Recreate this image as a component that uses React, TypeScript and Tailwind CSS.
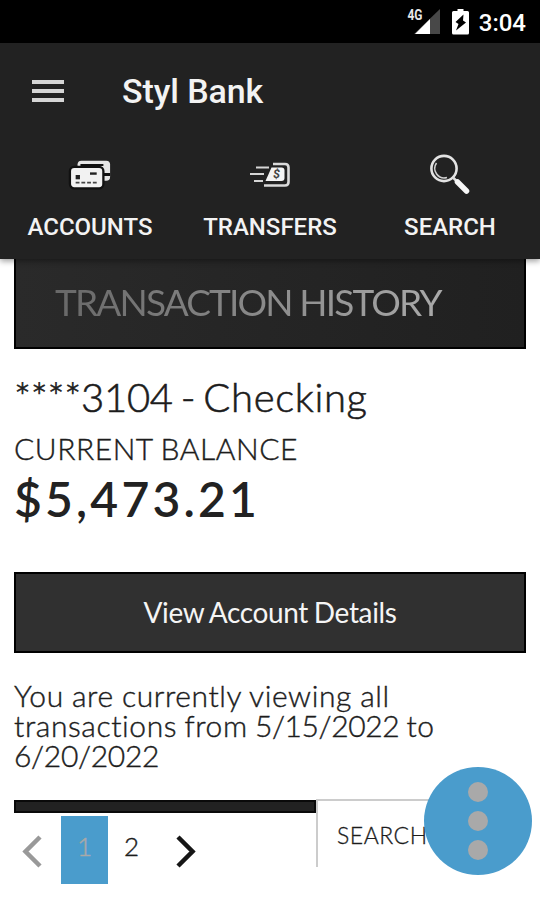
import type { ReactNode } from "react";

function StatusBar() {
  return (
    <div className="flex h-[43px] shrink-0 items-center justify-end bg-black pr-[14px] font-['Roboto',sans-serif] text-white">
      <svg width="74" height="30" viewBox="0 0 74 30" className="mt-px">
        <path d="M41 2 L41 27 L15 27 Z" fill="#484848" />
        <path d="M31 12 L31 27 L16 27 Z" fill="#fff" />
        <text x="8.500" y="12.500" fontSize="14" fontWeight="700" textLength="15" lengthAdjust="spacingAndGlyphs" fill="#e8e8e8">
          4G
        </text>
        <path d="M58.500 2 h6 v2 h4 q1.500 0 1.500 1.500 v20.500 q0 1.500 -1.500 1.500 h-14 q-1.500 0 -1.500 -1.500 v-20.500 q0 -1.500 1.500 -1.500 h4 z" fill="#fff" />
        <path d="M64.500 7.500 L56.500 15 l3 2 l-2.500 6.500 L67 15.500 l-3 -2 z" fill="#000" />
      </svg>
      <span className="mt-[2px] ml-[6px] text-[24px] leading-none font-medium">3:04</span>
    </div>
  );
}

function CardsIcon() {
  return (
    <svg width="44" height="34" viewBox="0 0 46 34">
      <rect x="10" y="2" width="34" height="21" rx="4" fill="#e6e6e6" />
      <path d="M37 15h7v3h-7zM13 5.500h24v2H13z" fill="#111" />
      <rect x="2" y="8.500" width="35" height="22.500" rx="4.500" fill="#f2f2f2" stroke="#111" strokeWidth="2.400" />
      <rect x="8" y="17" width="4.500" height="4.500" fill="#222" />
      <path d="M23 15.500h7" stroke="#222" strokeWidth="2.500" />
      <path d="M8 25h22" stroke="#444" strokeWidth="1.800" strokeDasharray="4 2" />
    </svg>
  );
}

function TransferIcon() {
  return (
    <svg width="42" height="28" viewBox="0 0 42 28">
      <path d="M7 6.500h13M1 13h14M5 20h9" stroke="#d6d6d6" strokeWidth="2.200" />
      <path d="M24 3h12q3.500 0 3.500 3.500v14.500q0 3.500-3.500 3.500H15" fill="none" stroke="#dadada" strokeWidth="2.600" />
      <path d="M22.500 6.500h10q3 0 3 3v7.500q0 3-3 3H16.500z" fill="#f4f4f4" />
      <text x="25.500" y="17.500" fontSize="12" fontWeight="700" fill="#444" transform="skewX(-6)">
        $
      </text>
    </svg>
  );
}

function SearchIcon() {
  return (
    <svg width="44" height="44" viewBox="0 0 44 44">
      <circle cx="16" cy="15.500" r="12.600" fill="none" stroke="#e3e3e3" strokeWidth="2.600" />
      <path d="M8.500 10a9.500 9.500 0 0 0 10.500 14.500" fill="none" stroke="#cfcfcf" strokeWidth="1.600" />
      <path d="M25 24.500l3.500 3.500" stroke="#ddd" strokeWidth="2.500" />
      <path d="M29.500 29l9 9" stroke="#f7f7f7" strokeWidth="5.500" strokeLinecap="round" />
    </svg>
  );
}

function Tab({ icon, children }: { icon: ReactNode; children: ReactNode }) {
  return (
    <button type="button" className="flex flex-col items-center">
      <span className="flex h-[71px] items-center pt-[3px]">{icon}</span>
      <span className="text-[24px] leading-[36px] font-medium">{children}</span>
    </button>
  );
}

function Header() {
  return (
    <header className="z-10 flex h-[216px] shrink-0 flex-col bg-[#222] font-['Roboto',sans-serif] text-[#f3f3f3] shadow-[0_2px_6px_rgba(0,0,0,0.4)]">
      <div className="flex h-[95px] items-center">
        <div className="ml-[32px] flex w-[32px] flex-col gap-[5px]">
          <span className="h-[4px] bg-[#d6d6d6]" />
          <span className="h-[4px] bg-[#d6d6d6]" />
          <span className="h-[4px] bg-[#d6d6d6]" />
        </div>
        <h1 className="mt-px ml-[58px] text-[34px] font-medium tracking-[-0.1px] whitespace-nowrap">Styl Bank</h1>
      </div>
      <nav className="grid grid-cols-3">
        <Tab icon={<CardsIcon />}>ACCOUNTS</Tab>
        <Tab icon={<TransferIcon />}>TRANSFERS</Tab>
        <Tab icon={<SearchIcon />}>SEARCH</Tab>
      </nav>
    </header>
  );
}

function Pager() {
  return (
    <div className="flex w-[302px] flex-col">
      <div className="mt-[2px] h-[13px] border-2 border-[#0a0a0a] bg-[#222]" />
      <div className="mt-[3px] flex h-[68px] items-center">
        <svg width="47" height="40" viewBox="0 0 47 40" fill="none" stroke="#999" strokeWidth="4.500">
          <path d="M26 7L11.500 21.500L26 36" />
        </svg>
        <span className="flex h-full w-[47px] justify-center bg-[#4a9ccc] text-[26px] leading-[60px] font-light text-[#a9a9a9] [-webkit-text-stroke:0.5px]">1</span>
        <span className="h-full w-[47px] text-center text-[26px] leading-[60px] font-light [-webkit-text-stroke:0.4px]">2</span>
        <svg width="60" height="40" viewBox="0 0 60 40" fill="none" stroke="#161616" strokeWidth="4.500">
          <path d="M23 7L37.500 21.500L23 36" />
        </svg>
      </div>
    </div>
  );
}

export default function App() {
  return (
    <div className="relative flex h-[900px] w-[540px] flex-col overflow-hidden bg-white font-['Lato',sans-serif] text-[#1c1c1c]">
      <StatusBar />
      <Header />
      <main className="flex flex-col px-[14px]">
        <h2 className="h-[90px] border-2 border-t-0 border-black bg-linear-to-r from-[#2a2a2a] to-[#202020] pl-[39px] text-[37px] leading-[85px] tracking-[-1.850px] whitespace-nowrap">
          <span className="bg-linear-to-r from-[#686868] to-[#aaa] bg-clip-text pr-[4px] text-transparent">TRANSACTION HISTORY</span>
        </h2>
        <p className="mt-[23px] text-[40px] leading-[50px] font-light whitespace-nowrap [-webkit-text-stroke:0.6px]">
          <span className="tracking-[-0.250px]">****3104</span>
          <span className="[word-spacing:-3px]"> - </span>
          <span className="tracking-[0.650px]">Checking</span>
        </p>
        <p className="mt-[11px] text-[30px] leading-[30px] font-light tracking-[0.550px] [word-spacing:-1px] [-webkit-text-stroke:0.4px]">
          CURRENT BALANCE
        </p>
        <p className="mt-[6px] text-[48px] leading-[60px] font-semibold tracking-[3.200px] text-[#222]">$5,473.21</p>
        <button type="button" className="mt-[43px] h-[81px] border-2 border-black bg-[#303030] pb-[2px] text-[28px] tracking-[-0.350px] text-[#f5f5f5] [word-spacing:-1px]">
          View Account Details
        </button>
        <p className="mt-[27px] text-[30px] leading-[30px] font-light tracking-[0.600px] whitespace-nowrap [word-spacing:-0.500px] [-webkit-text-stroke:0.4px]">
          You are currently viewing all
          <br />
          <span className="[word-spacing:-1.500px]">
            transactions from <span className="tracking-[-0.400px]">5/15/2022</span> to
          </span>
          <br />
          <span className="tracking-[-0.300px]">6/20/2022</span>
        </p>
        <div className="mt-[28px] flex">
          <Pager />
          <div className="mt-px h-[68px] flex-1 border-t-2 border-l-2 border-[#ccc] pl-[19px] text-[23px] leading-[69px] font-light tracking-[0.500px] [-webkit-text-stroke:0.3px]">
            SEARCH
          </div>
        </div>
      </main>
      <button type="button" className="absolute top-[767px] left-[424px] flex size-[108px] flex-col items-center justify-center gap-[9px] rounded-full bg-[#4a9ccc]">
        <span className="size-[20px] rounded-full bg-[#a9a9a9]" />
        <span className="size-[20px] rounded-full bg-[#a9a9a9]" />
        <span className="size-[20px] rounded-full bg-[#a9a9a9]" />
      </button>
    </div>
  );
}
